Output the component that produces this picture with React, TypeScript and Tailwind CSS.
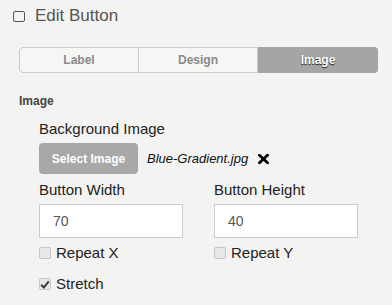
import React from "react";

const Box = ({ checked }: { checked?: boolean }) => (
  <span className="relative w-[12px] h-[12px] rounded-[2px] border border-[#c6c6c6] bg-[#e9e9e9] inline-flex items-center justify-center shrink-0">
    {checked && (
      <svg width="10" height="9" viewBox="0 0 10 9">
        <path d="M1.2 4.8 L3.8 7.4 L8.8 1.4" fill="none" stroke="#3a3a3a" strokeWidth="2" />
      </svg>
    )}
  </span>
);

export default function App() {
  return (
    <div className="w-[392px] h-[305px] bg-[#f3f3f2] overflow-hidden font-['Liberation_Sans',Arial,sans-serif]">
      <div className="h-[32px] flex items-center pl-[13px]">
        <span className="w-[12px] h-[11px] rounded-[2px] border border-[#555] shrink-0" />
        <span className="ml-[10px] text-[17px] text-[#555]">Edit Button</span>
      </div>
      <div className="pl-[19px] pr-[14px]">
        <div className="mt-[15px] h-[26px] flex text-[12px] font-bold">
          <div className="w-[120px] shrink-0 flex items-center justify-center border border-[#cccccc] rounded-l-[4px] bg-[#f6f6f5] text-[#8a8a8a]">
            Label
          </div>
          <div className="w-[119px] shrink-0 flex items-center justify-center border-y border-r border-[#cccccc] bg-[#f6f6f5] text-[#8a8a8a]">
            Design
          </div>
          <div className="w-[120px] shrink-0 flex items-center justify-center rounded-r-[4px] bg-[#a5a5a5] text-white [text-shadow:0_1px_1px_rgba(0,0,0,0.85)]">
            Image
          </div>
        </div>
        <div className="mt-[20px] h-[16px] flex items-center text-[12px] font-bold text-[#444]">Image</div>
        <div className="pl-[20px]">
          <div className="mt-[10px] h-[20px] flex items-center text-[15px] text-[#222]">Background Image</div>
          <div className="mt-[4px] h-[31px] flex items-center">
            <div className="w-[99px] h-[31px] rounded-[4px] bg-[#a8a8a8] text-white text-[12px] font-bold flex items-center justify-center">
              Select Image
            </div>
            <span className="ml-[9px] text-[13px] italic text-[#111]">Blue-Gradient.jpg</span>
            <svg className="ml-[10px]" width="11" height="10" viewBox="0 0 11 10">
              <path d="M1.5 1.2 L9.5 8.8 M9.5 1.2 L1.5 8.8" stroke="#000" strokeWidth="2.8" strokeLinecap="square" />
            </svg>
          </div>
          <div className="flex gap-[31px]">
            <div className="w-[144px]">
              <div className="mt-[6px] h-[20px] flex items-center text-[15px] text-[#222]">Button Width</div>
              <div className="mt-[4px] h-[34px] border border-[#cccccc] bg-white flex items-center pl-[13px] text-[14px] text-[#555]">70</div>
              <div className="mt-[7px] h-[16px] flex items-center">
                <Box />
                <span className="ml-[5px] text-[15px] text-[#222]">Repeat X</span>
              </div>
              <div className="mt-[15px] h-[16px] flex items-center">
                <Box checked />
                <span className="ml-[5px] text-[15px] text-[#222]">Stretch</span>
              </div>
            </div>
            <div className="w-[144px]">
              <div className="mt-[6px] h-[20px] flex items-center text-[15px] text-[#222]">Button Height</div>
              <div className="mt-[4px] h-[34px] border border-[#cccccc] bg-white flex items-center pl-[13px] text-[14px] text-[#555]">40</div>
              <div className="mt-[7px] h-[16px] flex items-center">
                <Box />
                <span className="ml-[5px] text-[15px] text-[#222]">Repeat Y</span>
              </div>
            </div>
          </div>
        </div>
      </div>
    </div>
  );
}
